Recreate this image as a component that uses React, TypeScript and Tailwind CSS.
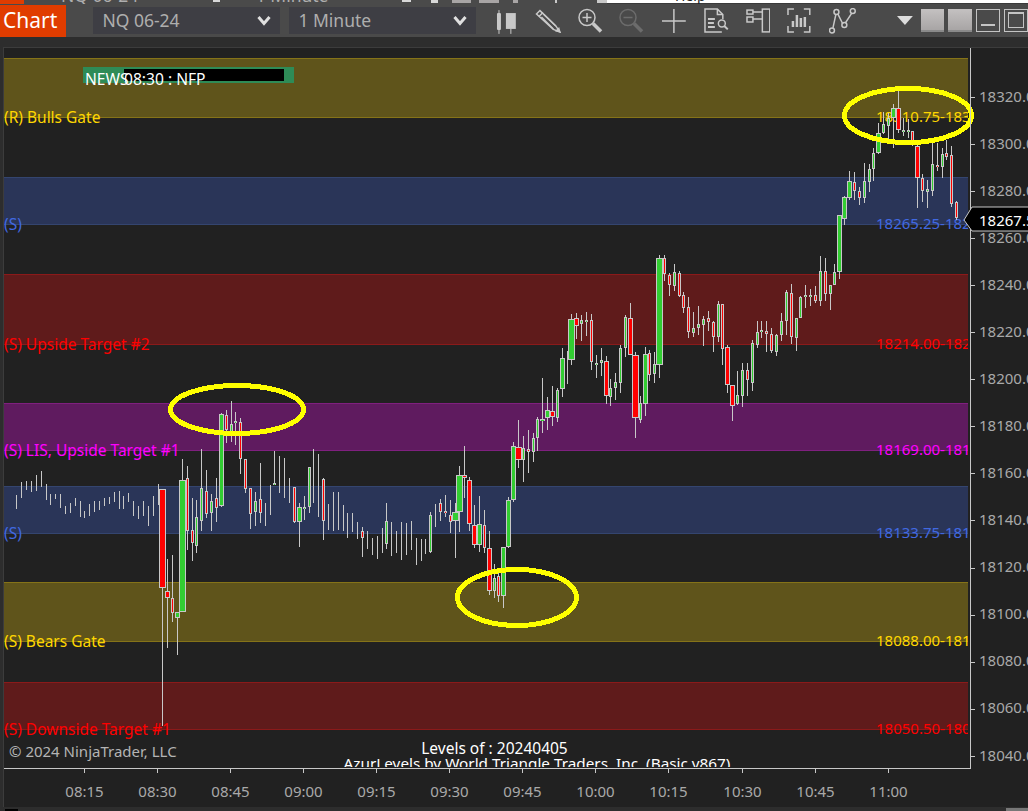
type Candle = [number, number, number?, number?, ("g" | "r")?, number?];

// wick top, wick bottom, body top, body bottom, colour, outer body width. one entry per minute
const candles: Candle[] = [
  [495, 509], [482, 498], [481, 490], [481, 492], [475, 491], [471, 487], [484, 500], [494, 505], [494, 499], [494, 508],
  [506, 514], [503, 513], [498, 506], [501, 517], [511, 518], [504, 516], [501, 512], [501, 510], [498, 506], [497, 504],
  [492, 502], [491, 509], [496, 509], [493, 502], [501, 516], [506, 519], [501, 516], [506, 526], [496, 516], [484, 505],
  [489, 726, 489, 588, "r", 7], [559, 648, 591, 598, "r", 5], [555, 622, 598, 613, "r", 3], [612, 655, 612, 618, "g", 5], [459, 612, 480, 612, "g", 7],
  [466, 550, 478, 531, "r", 3], [498, 561, 530, 543, "r", 3], [500, 553, 517, 546, "g", 3], [449, 531, 488, 521, "g", 3], [470, 518, 491, 514, "r", 3],
  [494, 531, 501, 513, "g", 3], [478, 522, 498, 508, "r", 3], [413, 507, 414, 506, "g", 5], [410, 443, 415, 430, "r", 3], [401, 442, 424, 432, "g", 3],
  [412, 445, 421, 423, "g", 3], [418, 474, 422, 459, "r", 3], [459, 493, 459, 489, "r", 3], [488, 529, 488, 514, "r", 3], [492, 526, 501, 512, "g", 3],
  [463, 523, 499, 513, "r", 3], [503, 526], [485, 515], [451, 485, 483, 485, "g", 3], [456, 493], [458, 498], [478, 503], [487, 523, 487, 522, "r", 3],
  [503, 547, 507, 522, "g", 5], [496, 520, 507, 508, "g", 3], [467, 513, 467, 507, "g", 3], [449, 503], [454, 517], [478, 540, 479, 521, "r", 3], [504, 530],
  [492, 531], [492, 530], [505, 531], [513, 538], [513, 532], [522, 539], [527, 557, 531, 538, "r", 3], [531, 549], [538, 555], [536, 559], [528, 553],
  [503, 549, 521, 544, "g", 3], [522, 556], [531, 553], [522, 560], [523, 555], [521, 550], [538, 565], [539, 561], [539, 554], [512, 553, 515, 552, "g", 3],
  [504, 527], [499, 521, 503, 512, "r", 3], [495, 517, 511, 513, "r", 3], [500, 533, 515, 522, "r", 3], [503, 558, 512, 521, "g", 7], [466, 532, 475, 512, "g", 7],
  [446, 498, 475, 478, "r", 5], [477, 531, 480, 524, "r", 5], [505, 548, 525, 545, "r", 5], [496, 552, 524, 545, "g", 5], [510, 553, 525, 548, "r", 3],
  [531, 595, 548, 591, "r", 5], [564, 598, 578, 591, "g", 3], [573, 602, 576, 596, "r", 3], [547, 608, 547, 596, "g", 5], [497, 548, 500, 547, "g", 5],
  [442, 502, 446, 500, "g", 5], [420, 468, 447, 460, "r", 7], [436, 482, 448, 460, "g", 3], [430, 473, 449, 452, "r", 3], [433, 462, 438, 452, "g", 3],
  [417, 451, 419, 438, "g", 3], [378, 433, 419, 421, "g", 5], [397, 430, 410, 418, "g", 5], [386, 426, 411, 417, "r", 5], [388, 422, 390, 418, "g", 3],
  [348, 397, 358, 389, "g", 5], [351, 384], [314, 365, 319, 360, "g", 7], [313, 339, 318, 326, "r", 5], [315, 341, 320, 324, "g", 3], [312, 336, 320, 322, "g", 3],
  [314, 370, 320, 362, "r", 3], [355, 378, 363, 365, "g", 3], [348, 376, 360, 363, "g", 3], [356, 404, 361, 396, "r", 5], [379, 406, 388, 397, "g", 3],
  [373, 400, 382, 388, "g", 3], [345, 393, 348, 383, "g", 3], [315, 357, 317, 348, "g", 3], [303, 355, 318, 355, "r", 5], [352, 438, 355, 418, "r", 7],
  [396, 423, 403, 420, "g", 3], [347, 416, 354, 404, "g", 5], [350, 381, 353, 375, "r", 3], [352, 383, 364, 374, "g", 3], [255, 378, 258, 365, "g", 7],
  [255, 281, 258, 274, "r", 3], [273, 296, 275, 285, "r", 3], [264, 291, 272, 286, "g", 3], [271, 297, 273, 296, "r", 3], [292, 313, 295, 308, "r", 3],
  [297, 338, 307, 332, "r", 3], [312, 337, 328, 333, "g", 3], [306, 335, 324, 328, "g", 3], [316, 346, 319, 325, "g", 3], [311, 331, 318, 322, "r", 3],
  [321, 352, 322, 337, "r", 3], [301, 342, 304, 337, "g", 3], [304, 365, 304, 349, "r", 3], [345, 393, 347, 385, "r", 5], [385, 421, 385, 406, "r", 5],
  [371, 405, 395, 404, "g", 3], [363, 407, 370, 396, "g", 3], [363, 396, 370, 380, "r", 3], [340, 391, 343, 383, "g", 3], [321, 348, 332, 345, "g", 3],
  [321, 338, 330, 332, "g", 3], [321, 352, 331, 334, "r", 3], [328, 353, 334, 351, "r", 3], [334, 356, 335, 352, "g", 3], [313, 341, 321, 335, "g", 3],
  [290, 335, 292, 321, "g", 3], [284, 344, 293, 337, "r", 3], [318, 351, 318, 338, "g", 3], [296, 318, 297, 318, "g", 3], [285, 308, 295, 297, "g", 3],
  [289, 306, 295, 297, "g", 3], [286, 303, 295, 301, "r", 3], [256, 306, 271, 301, "g", 3], [258, 301, 271, 294, "r", 3], [285, 310, 285, 294, "g", 3],
  [264, 285, 272, 285, "g", 3], [215, 279, 215, 272, "g", 5], [196, 225, 197, 219, "g", 5], [171, 200, 181, 198, "g", 5], [172, 200, 182, 191, "r", 3],
  [187, 205, 191, 198, "r", 3], [163, 203, 181, 198, "g", 3], [164, 192, 169, 182, "g", 3], [148, 181, 153, 169, "g", 3], [123, 154, 133, 153, "g", 5],
  [112, 134, 124, 133, "g", 3], [113, 140, 118, 126, "g", 3], [104, 148, 108, 118, "g", 5], [91, 133, 108, 130, "r", 5], [118, 136, 130, 131, "g", 3],
  [119, 138, 130, 131, "g", 3], [131, 146, 131, 142, "r", 3], [140, 208, 146, 178, "r", 5], [174, 202, 178, 191, "r", 3], [180, 208, 189, 192, "g", 3],
  [143, 196, 164, 191, "g", 3], [143, 171, 165, 167, "r", 3], [148, 178, 154, 167, "g", 3], [140, 160, 153, 157, "r", 3], [146, 207, 155, 204, "r", 3],
  [201, 220, 202, 218, "r", 3],
];

const bands = [
  { top: 58, bottom: 117, fill: "#5f541b", line: "#857318", text: "#ffd700", left: "(R) Bulls Gate", right: "18310.75-18329.25" },
  { top: 177, bottom: 224, fill: "#2a3558", line: "#34456f", text: "#4169e1", left: "(S)", right: "18265.25-18285.25" },
  { top: 274, bottom: 344, fill: "#5f1b1b", line: "#8b1a1a", text: "#ff0000", left: "(S) Upside Target #2", right: "18214.00-18243.75" },
  { top: 403, bottom: 450, fill: "#5f1b5f", line: "#80207f", text: "#ff00ff", left: "(S) LIS, Upside Target #1", right: "18169.00-18189.00" },
  { top: 486, bottom: 533, fill: "#2a3558", line: "#34456f", text: "#4169e1", left: "(S)", right: "18133.75-18153.75" },
  { top: 582, bottom: 641, fill: "#5f541b", line: "#857318", text: "#ffd700", left: "(S) Bears Gate", right: "18088.00-18113.00" },
  { top: 682, bottom: 729, fill: "#5f1b1b", line: "#8b1a1a", text: "#ff0000", left: "(S) Downside Target #1", right: "18050.50-18070.50" },
];

const prices = [18320, 18300, 18280, 18260, 18240, 18220, 18200, 18180, 18160, 18140, 18120, 18100, 18080, 18060, 18040];
const times = [
  ["08:15", 84], ["08:30", 157], ["08:45", 230], ["09:00", 303], ["09:15", 376], ["09:30", 449],
  ["09:45", 522], ["10:00", 595], ["10:15", 668], ["10:30", 742], ["10:45", 815], ["11:00", 888],
] as const;

function Chart() {
  return (
    <svg width={1024} height={759} viewBox="4 48 1024 759" className="block">
      <defs>
        <clipPath id="plot">
          <rect x={4} y={48} width={964} height={719} />
        </clipPath>
      </defs>

      {bands.map((b) => (
        <g key={b.top} shapeRendering="crispEdges">
          <rect x={4} y={b.top} width={964} height={b.bottom - b.top} fill={b.fill} />
          <rect x={4} y={b.top} width={964} height={1} fill={b.line} />
          <rect x={4} y={b.bottom} width={964} height={1} fill={b.line} />
        </g>
      ))}

      <g shapeRendering="crispEdges">
        <rect x={83} y={67} width={211} height={16} fill="#2e8b57" />
        <rect x={124} y={69} width={160} height={12} fill="#000000" />
      </g>
      <text x={85} y={85} fontSize={15.6} fill="#ffffff">NEWS</text>
      <text x={124} y={85} fontSize={15.6} fill="#ffffff">08:30 : NFP</text>

      <g clipPath="url(#plot)">
        {bands.map((b) => (
          <g key={b.top} fill={b.text}>
            <text x={4} y={b.bottom + 6} fontSize={15.5}>{b.left}</text>
            <text x={876} y={b.bottom + 5} fontSize={15}>{b.right}</text>
          </g>
        ))}
        <text x={9} y={757} fontSize={15} fill="#b4b4b4">© 2024 NinjaTrader, LLC</text>
        <text x={494.5} y={754} fontSize={15.5} fill="#ffffff" textAnchor="middle">Levels of : 20240405</text>
        <text x={537} y={769} fontSize={15.3} fill="#ffffff" textAnchor="middle">AzurLevels by World Triangle Traders, Inc. (Basic v867)</text>
      </g>

      <g shapeRendering="crispEdges">
        {candles.map(([top, bottom, bodyTop, bodyBottom, color, w = 3], i) => {
          const cx = Math.round(16.3 + 4.87 * i);
          return (
            <g key={i}>
              <rect x={cx} y={top} width={1} height={bottom - top} fill="#c8c8c8" />
              {bodyTop !== undefined && bodyBottom !== undefined && (
                <>
                  <rect x={cx + 0.5 - w / 2} y={bodyTop} width={w} height={Math.max(bodyBottom - bodyTop, 2)} fill="#c8c8c8" />
                  <rect
                    x={cx + 1.5 - w / 2}
                    y={bodyTop + 1}
                    width={w - 2}
                    height={Math.max(bodyBottom - bodyTop - 2, 1)}
                    fill={color === "g" ? "#32cd32" : "#ff0000"}
                  />
                </>
              )}
            </g>
          );
        })}
      </g>

      <g fill="none" stroke="#ffff00" strokeWidth={5} shapeRendering="crispEdges">
        <ellipse cx={908} cy={115.5} rx={63.5} ry={27} />
        <ellipse cx={237} cy={409.5} rx={66.5} ry={24} />
        <ellipse cx={517} cy={597.5} rx={59.5} ry={28} />
      </g>

      {/* axes */}
      <g shapeRendering="crispEdges" fill="#c8c8c8">
        <rect x={970} y={48} width={1} height={721} />
        <rect x={4} y={768} width={967} height={1} />
        {prices.map((_, i) => (
          <rect key={i} x={970} y={97 + i * 47.05} width={5} height={1} />
        ))}
        {times.map(([t, x]) => (
          <rect key={t} x={x} y={768} width={1} height={5} />
        ))}
      </g>
      <g fontSize={15} fill="#a9a9a9">
        {prices.map((p, i) => (
          <text key={p} x={979} y={101.8 + i * 47.05}>{p}.00</text>
        ))}
        {times.map(([t, x]) => (
          <text key={t} x={x + 0.5} y={797} textAnchor="middle">{t}</text>
        ))}
      </g>

      <polygon points="964,220 972,207 1030,207 1030,231 972,231" fill="#000000" stroke="#c8c8c8" />
      <text x={979} y={226} fontSize={15} fill="#ffffff">18267.50</text>
    </svg>
  );
}

function Chevron() {
  return (
    <svg width={14} height={11} viewBox="0 0 14 11" fill="none" stroke="#e0e0e0" strokeWidth={3}>
      <path d="M1.5 2 7 8.5 12.5 2" />
    </svg>
  );
}

function Dropdown({ label }: { label: string }) {
  return (
    <div className="flex h-[27px] w-[187px] items-center justify-between bg-[#3e3e44] pl-[9px] pr-[9px] text-[17.5px] text-[#aeaeae]">
      <span>{label}</span>
      <Chevron />
    </div>
  );
}

const stroke = "#c9c9c9";

function Magnifier({ color, plus }: { color: string; plus?: boolean }) {
  return (
    <svg width={26} height={26} viewBox="0 0 26 26" fill="none" stroke={color} strokeWidth={1.5}>
      <circle cx={10} cy={9.5} r={8} />
      <path d="M5.5 9.5h9" />
      {plus && <path d="M10 5v9" />}
      <path d="M16 15.5 24 23.5" strokeWidth={3.5} />
    </svg>
  );
}

function Toolbar() {
  return (
    <div className="flex h-[33px] items-center bg-[#4a4a4a]">
      <div className="flex h-[32px] w-[67px] items-center bg-[#e03c00] pl-[3px] text-[21px] leading-none text-white">Chart</div>
      <div className="ml-[27px] flex gap-[9px]">
        <Dropdown label="NQ 06-24" />
        <Dropdown label="1 Minute" />
      </div>

      <svg width={22} height={26} viewBox="0 0 22 26" fill={stroke} className="ml-[20px]">
        <rect x={1} y={5} width={4} height={17} rx={1} />
        <rect x={2.5} y={2} width={1} height={24} />
        <rect x={10} y={5} width={10} height={16} />
        <rect x={14.5} y={21} width={1} height={5} />
      </svg>
      <svg width={26} height={24} viewBox="0 0 26 24" fill="none" stroke={stroke} strokeWidth={1.5} className="ml-[17px]">
        <path d="M1.5 5 5 1.5 21 17 25 23 18.5 20.5Z" />
        <path d="M4 7.5 8 3.5M6.5 8 18.5 20M9 5.5 21 17" />
        <path d="M25 23 21.5 22 24 19.5Z" fill={stroke} />
      </svg>
      <div className="ml-[16px]">
        <Magnifier color={stroke} plus />
      </div>
      <div className="ml-[15px]">
        <Magnifier color="#6c6c6c" />
      </div>
      <svg width={24} height={24} viewBox="0 0 24 24" stroke={stroke} strokeWidth={1.5} className="ml-[18px]">
        <path d="M0 12h24M12 0v24" />
      </svg>
      <svg width={25} height={25} viewBox="0 0 25 25" fill="none" stroke={stroke} strokeWidth={1.5} className="ml-[18px]">
        <path d="M19 11V6.5L13.5 1H1v23h17" />
        <path d="M13.5 1v5.5H19" />
        <path d="M4 11h7M4 15h6M4 19h7" strokeWidth={2} />
        <circle cx={18} cy={15.5} r={3.5} />
        <path d="M20.5 18 24 21.5" strokeWidth={2} />
      </svg>
      <svg width={25} height={25} viewBox="0 0 25 25" fill="none" stroke={stroke} strokeWidth={1.5} className="ml-[17px]">
        <rect x={1} y={2} width={6} height={4} />
        <rect x={1} y={9} width={6} height={5} />
        <rect x={16.5} y={1} width={7.5} height={23} />
        <path d="M7 4h9.5M7 11h9.5" />
      </svg>
      <svg width={24} height={25} viewBox="0 0 24 25" fill="none" stroke={stroke} strokeWidth={1.5} className="ml-[17px]">
        <path d="M7 1H1v6M17 1h6v6M7 24H1v-6M17 24h6v-6" />
        <path d="M6 19v-6M10 19V7M14 19V10M18 19V9" strokeWidth={2.5} />
      </svg>
      <svg width={28} height={26} viewBox="0 0 28 26" fill="none" stroke={stroke} strokeWidth={1.5} className="ml-[18px]">
        <path d="M4 20 7 6M9 6l5 10M16.5 15 23 5" />
        <circle cx={3} cy={22.5} r={2.5} />
        <circle cx={7.5} cy={4} r={2.5} />
        <circle cx={15.5} cy={17} r={2.5} />
        <circle cx={24} cy={3} r={2.5} />
      </svg>

      <svg width={16} height={9} viewBox="0 0 16 9" fill="#dddddd" className="ml-[40px]">
        <path d="M0 0h16L8 9Z" />
      </svg>
      <div className="ml-[8px] h-[23px] w-[24px] border-b-2 border-[#8a8a8a] bg-linear-to-b from-[#c4c1c1] to-[#a8a5a5]" />
      <div className="ml-[4px] h-[23px] w-[24px] border-b-2 border-[#8a8a8a] bg-linear-to-b from-[#c4c1c1] to-[#a8a5a5]" />
      <div className="ml-[4px] flex h-[23px] w-[24px] items-end justify-center border border-[#c4c4c4] pb-[5px]">
        <div className="h-[2px] w-[14px] bg-[#c4c4c4]" />
      </div>
      <div className="ml-[4px] h-[23px] w-[24px] shrink-0 border border-[#c4c4c4] px-[3px] pb-[3px] pt-[2px]">
        <div className="h-full border border-t-2 border-[#c4c4c4]" />
      </div>
    </div>
  );
}

// the row above the toolbar only shows its bottom few pixels
function ClippedRow() {
  return (
    <div className="flex h-[4px] overflow-hidden leading-none">
      <div className="flex w-[607px] bg-[#4a4a4a] text-[17.5px] text-[#aeaeae]">
        <div className="h-full w-[25px] bg-[#e03c00]" />
        <span className="-mt-[13px] ml-[37px] w-[158px]">NQ 06-24</span>
        <div className="h-[2px] w-[7px] bg-[#d8d8d8]" />
        <span className="-mt-[13px] ml-[36px] w-[152px]">1 Minute</span>
        <div className="h-[2px] w-[9px] bg-[#d8d8d8]" />
        <div className="ml-[20px] h-[3px] w-[8px] bg-[#d8d8d8]" />
        <div className="ml-[14px] h-[3px] w-[20px] bg-[#a8a5a5]" />
        <div className="ml-[8px] h-[3px] w-[20px] bg-[#a8a5a5]" />
        <div className="ml-[14px] h-[3px] w-[6px] bg-[#a8a5a5]" />
        <div className="ml-[37px] h-[3px] w-[2px] bg-[#c9c9c9]" />
        <div className="ml-[40px] h-[3px] w-[10px] bg-[#c9c9c9]" />
      </div>
      <div className="flex flex-1 border-b border-[#3a3a3a] bg-white text-[14px] text-[#222222]">
        <span className="-mt-[11px] ml-[68px]">Help</span>
      </div>
    </div>
  );
}

export default function App() {
  return (
    <div className="flex h-[811px] w-[1028px] flex-col overflow-hidden bg-[#2d2d2d] font-['Noto_Sans',sans-serif]">
      <ClippedRow />
      <Toolbar />
      <div className="h-[10px] bg-[#2d2d2d]" />
      <div className="h-[760px] pl-[3px]">
        <div className="h-full border-l border-t border-[#3c3c3c] bg-[#212121]">
          <Chart />
        </div>
      </div>
      <div className="flex h-[4px] items-end justify-between">
        <div className="ml-[5px] h-[2px] w-[13px] bg-black" />
        <div className="h-[3px] w-[22px] bg-[#777777]" />
      </div>
    </div>
  );
}
